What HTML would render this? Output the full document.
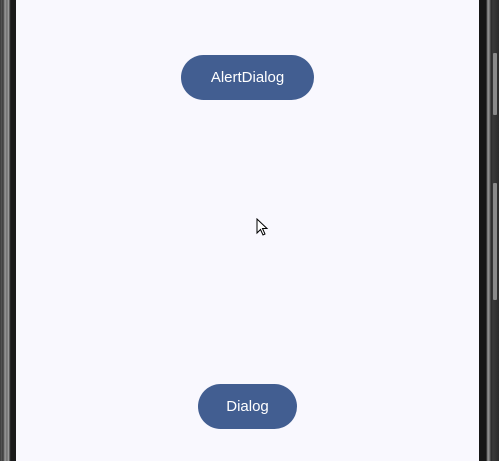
<!DOCTYPE html>
<html><head><style>
body{margin:0;width:499px;height:461px;overflow:hidden;background:#1a1a1a;position:relative;font-family:"Liberation Sans",sans-serif}
.l{position:absolute;left:0;top:0;width:16px;height:461px;background:linear-gradient(90deg,#3a3a3a 0,#5a5a5a 2px,#2a2a2a 3px,#777 4px,#999 6px,#555 7px,#aaa 8px,#888 9px,#333 10px,#1a1a1a 11px,#1a1a1a 16px)}
.r{position:absolute;left:479px;top:0;width:20px;height:461px;background:linear-gradient(90deg,#161616 0,#161616 7px,#555 8px,#9a9a9a 9px,#666 11px,#2a2a2a 12px,#3a3a3a 14px,#2a2a2a 20px)}
.s{position:absolute;left:16px;top:0;width:463px;height:461px;background:#f9f8fe}
.b{position:absolute;background:#425e91;color:#fff;border-radius:23px;height:45px;line-height:45px;text-align:center;font-size:15px}
.k{position:absolute;left:493px;width:4px;background:#8a8a8a;border-radius:1px}
</style></head><body>
<div class="l"></div><div class="r"></div>
<div class="k" style="top:53px;height:62px"></div>
<div class="k" style="top:183px;height:117px"></div>
<div class="s"></div>
<div class="b" style="left:181px;top:55px;width:133px">AlertDialog</div>
<div class="b" style="left:198px;top:384px;width:99px">Dialog</div>
<svg style="position:absolute;left:256px;top:218px" width="14" height="20" viewBox="0 0 14 20"><path d="M1 1 L1 15 L4.5 11.5 L7 17 L9 16 L6.5 10.5 L11 10.5 Z" fill="#fff" stroke="#000" stroke-width="1"/></svg>
</body></html>
